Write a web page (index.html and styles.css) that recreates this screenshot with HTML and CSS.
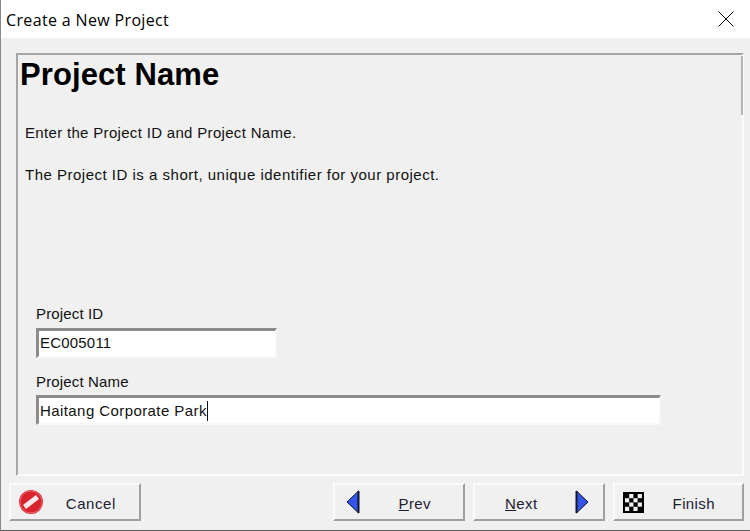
FILE: index.html
```html
<!DOCTYPE html>
<html lang="en">
<head>
<meta charset="utf-8">
<title>Create a New Project</title>
<link rel="stylesheet" href="styles.css">
</head>
<body>
<div class="window">
  <header class="titlebar">
    <span class="title">Create a New Project</span>
    <svg class="close" width="16" height="16" viewBox="0 0 16 16"><path d="M0.5 0.5L15.5 15.5M15.5 0.5L0.5 15.5" stroke="#000" stroke-width="1" fill="none"/></svg>
  </header>
  <main class="content">
    <section class="panel">
      <h1 class="heading">Project Name</h1>
      <p class="text first">Enter the Project ID and Project Name.</p>
      <p class="text second">The Project ID is a short, unique identifier for your project.</p>
      <div class="field id-field">
        <label class="label">Project ID</label>
        <div class="input input-id">EC005011</div>
      </div>
      <div class="field name-field">
        <label class="label">Project Name</label>
        <div class="input input-name">Haitang Corporate Park<span class="caret"></span></div>
      </div>
    </section>
    <footer class="footer">
      <button class="btn btn-cancel">
        <svg class="icon" width="26" height="26" viewBox="0 0 26 26"><circle cx="13" cy="13" r="12" fill="#d8222c"/><circle cx="13" cy="13" r="11" fill="none" stroke="#f08a8a" stroke-width="0.7"/><circle cx="13" cy="13" r="8.5" fill="#d8222c"/><path d="M6.5 18L19.5 8" stroke="#fbe9e9" stroke-width="5"/></svg>
        <span class="btn-label">Cancel</span>
      </button>
      <div class="nav">
        <button class="btn btn-prev">
          <svg class="icon" width="14" height="24" viewBox="0 0 14 24"><path d="M12.5 1L1 12L12.5 23Z" fill="#3355e8" stroke="#10182c" stroke-width="1"/><path d="M12.5 1V23" stroke="#10182c" stroke-width="2"/></svg>
          <span class="btn-label"><u>P</u>rev</span>
        </button>
        <button class="btn btn-next">
          <span class="btn-label"><u>N</u>ext</span>
          <svg class="icon" width="14" height="24" viewBox="0 0 14 24"><path d="M1.5 1L13 12L1.5 23Z" fill="#3355e8" stroke="#10182c" stroke-width="1"/><path d="M1.5 1V23" stroke="#10182c" stroke-width="2"/></svg>
        </button>
        <button class="btn btn-finish">
          <svg class="icon" width="21" height="21" viewBox="0 0 21 21"><rect width="21" height="21" fill="#000"/><g fill="#f0f0f0"><rect x="6.2" y="2" width="4.2" height="4.2"/><rect x="14.7" y="2" width="4.2" height="4.2"/><rect x="2" y="6.2" width="4.2" height="4.2"/><rect x="10.4" y="6.2" width="4.2" height="4.2"/><rect x="6.2" y="10.5" width="4.2" height="4.2"/><rect x="14.7" y="10.5" width="4.2" height="4.2"/><rect x="2" y="14.8" width="4.2" height="4.2"/><rect x="10.4" y="14.8" width="4.2" height="4.2"/></g></svg>
          <span class="btn-label">Finish</span>
        </button>
      </div>
    </footer>
  </main>
</div>
</body>
</html>
```

FILE: styles.css
```css
html, body {
  margin: 0;
  padding: 0;
  background: #f0f0f0;
}
.window {
  width: 750px;
  height: 531px;
  display: flex;
  flex-direction: column;
  box-sizing: border-box;
  border-left: 1px solid #8a8a8a;
  border-bottom: 1px solid #5a5a5a;
  font-family: "Liberation Sans", Arial, sans-serif;
  color: #111;
  overflow: hidden;
}
.titlebar {
  height: 38px;
  flex: none;
  background: #fff;
  display: flex;
  align-items: center;
  justify-content: space-between;
  padding: 0 16px 0 5px;
}
.title {
  font-family: "Open Sans", "Liberation Sans", sans-serif;
  font-size: 16px;
  letter-spacing: 0.35px;
  padding-top: 1px;
  color: #000;
}
.close {
  display: block;
}
.content {
  flex: 1;
  display: flex;
  flex-direction: column;
  padding: 15px 6px 0 15px;
  background: #f0f0f0;
}
.panel {
  position: relative;
  height: 423px;
  flex: none;
  box-sizing: border-box;
  border-top: 2px solid #a6a6a6;
  border-left: 2px solid #a6a6a6;
  border-right: 2px solid #fbfbfb;
  border-bottom: 2px solid #fbfbfb;
  padding: 0 0 0 2px;
}
.panel::after {
  content: "";
  position: absolute;
  top: 1px;
  right: -1px;
  width: 2px;
  height: 59px;
  background: #b4b4b4;
}
.heading {
  margin: 0;
  padding-top: 3px;
  font-size: 31px;
  letter-spacing: 0.1px;
  line-height: 34px;
  font-weight: bold;
  color: #000;
}
.text {
  margin: 0;
  padding-left: 5px;
  font-size: 15px;
  line-height: 16px;
}
.first {
  margin-top: 33px;
  letter-spacing: 0.32px;
}
.second {
  margin-top: 26px;
  letter-spacing: 0.5px;
}
.field {
  padding-left: 16px;
}
.id-field {
  margin-top: 123px;
}
.name-field {
  margin-top: 16px;
}
.label {
  display: block;
  font-size: 15px;
  letter-spacing: 0.15px;
  line-height: 16px;
  margin-bottom: 6px;
}
.name-field .label {
  margin-bottom: 5px;
}
.input {
  height: 30px;
  box-sizing: border-box;
  background: #fff;
  border-top: 3px solid #8c8c8c;
  border-left: 3px solid #8c8c8c;
  border-right: 2px solid #f8f8f8;
  border-bottom: 2px solid #f8f8f8;
  padding-left: 1px;
  font-size: 15px;
  letter-spacing: 0.42px;
  line-height: 22px;
  display: flex;
  align-items: center;
}
.input-id {
  width: 241px;
  padding-bottom: 2px;
  letter-spacing: 0.2px;
}
.input-name {
  width: 625px;
}
.caret {
  display: block;
  width: 1px;
  height: 20px;
  background: #111;
}
.footer {
  display: flex;
  justify-content: space-between;
  padding: 7px 0 0 0;
  margin-left: -7px;
}
.nav {
  display: flex;
  gap: 8px;
}
.btn {
  box-sizing: border-box;
  height: 38px;
  margin: 0;
  padding: 0 12px;
  background: #f0f0f0;
  border-top: 2px solid #fbfbfb;
  border-left: 2px solid #fbfbfb;
  border-right: 2px solid #a0a0a0;
  border-bottom: 2px solid #a0a0a0;
  font-family: "Liberation Sans", Arial, sans-serif;
  font-size: 15px;
  letter-spacing: 0.4px;
  color: #1c2030;
  display: flex;
  align-items: center;
  justify-content: space-between;
}
.btn-label {
  position: relative;
  top: 1px;
}
.btn-cancel {
  width: 132px;
  padding: 0 23px 0 7px;
  letter-spacing: 0.6px;
}
.btn-prev {
  width: 132px;
  padding: 0 32px 0 11px;
}
.btn-next {
  width: 132px;
  padding: 0 14px 0 30px;
}
.btn-finish {
  width: 131px;
  padding: 0 27px 0 8px;
}
.icon {
  display: block;
  flex: none;
}
```
